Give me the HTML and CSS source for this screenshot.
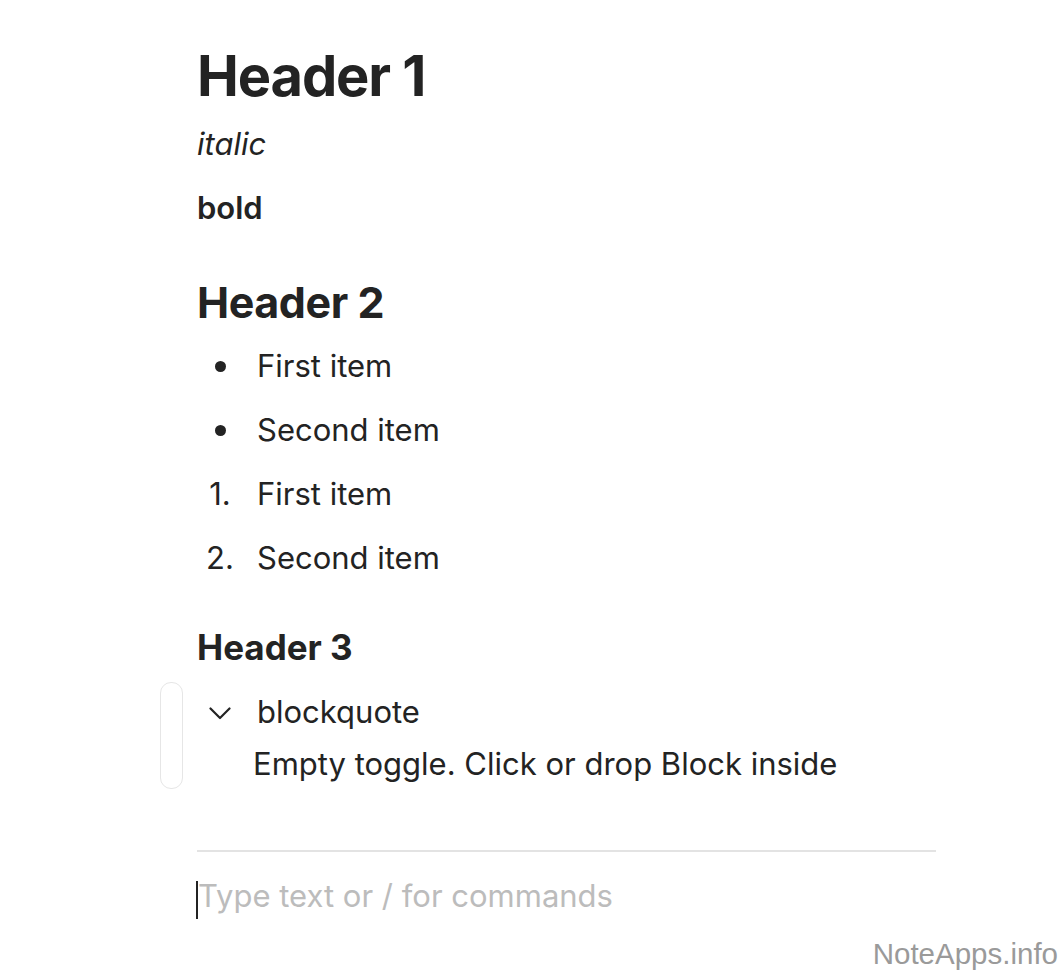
FILE: index.html
```html
<!DOCTYPE html>
<html lang="en">
<head>
    <meta charset="UTF-8">
    <meta name="viewport" content="width=device-width, initial-scale=1.0">
    <title>Editor</title>
    <link rel="stylesheet" href="styles.css">
</head>
<body>
    <div class="page">
        <h1 class="h1">Header 1</h1>
        <div class="block"><em>italic</em></div>
        <div class="block"><strong>bold</strong></div>

        <h2 class="h2">Header 2</h2>
        <div class="block list-item">
            <span class="marker"><span class="dot"></span></span>
            <span class="item-text">First item</span>
        </div>
        <div class="block list-item">
            <span class="marker"><span class="dot"></span></span>
            <span class="item-text">Second item</span>
        </div>
        <div class="block list-item">
            <span class="marker">1.</span>
            <span class="item-text">First item</span>
        </div>
        <div class="block list-item">
            <span class="marker">2.</span>
            <span class="item-text">Second item</span>
        </div>

        <h3 class="h3">Header 3</h3>
        <div class="toggle">
            <div class="drag-handle"></div>
            <div class="block list-item toggle-head">
                <span class="marker">
                    <svg class="chevron" width="22" height="13" viewBox="0 0 22 13">
                        <path d="M1.5 1.5 L11 11 L20.5 1.5" fill="none" stroke="#232323" stroke-width="2.2" stroke-linecap="round" stroke-linejoin="round"/>
                    </svg>
                </span>
                <span class="item-text">blockquote</span>
            </div>
            <div class="toggle-empty">Empty toggle. Click or drop Block inside</div>
        </div>

        <hr class="rule">

        <div class="input-line">
            <span class="caret"></span><span class="placeholder">Type text or / for commands</span>
        </div>
    </div>

    <div class="watermark">NoteApps.info</div>
</body>
</html>
```

FILE: styles.css
```css
body {
    margin: 0;
    background: #fff;
    color: #232323;
    font-family: Inter, "Noto Sans", sans-serif;
}
.page {
    width: 739px;
    padding: 44px 0 0 197px;
}
.h1 {
    margin: 0;
    font-size: 56px;
    line-height: 64px;
    font-weight: 700;
    letter-spacing: -0.02em;
    padding-bottom: 4px;
}
.h2 {
    margin: 36px 0 0;
    font-size: 43px;
    line-height: 52px;
    font-weight: 700;
    letter-spacing: -0.01em;
    padding-bottom: 6px;
}
.h3 {
    margin: 35px 0 0;
    font-size: 35px;
    line-height: 44px;
    font-weight: 700;
    padding-bottom: 11px;
}
.block {
    font-size: 31px;
    line-height: 44px;
    padding: 10px 0;
}
.block strong {
    font-weight: 600;
}
.list-item {
    display: flex;
}
.marker {
    width: 46px;
    height: 44px;
    display: flex;
    align-items: center;
    justify-content: center;
    flex-shrink: 0;
}
.dot {
    width: 11px;
    height: 11px;
    border-radius: 50%;
    background: #232323;
}
.item-text {
    margin-left: 14px;
}
.toggle {
    position: relative;
}
.toggle-head {
    padding-bottom: 8px;
}
.chevron {
    margin-top: 3px;
}
.drag-handle {
    position: absolute;
    left: -37px;
    top: 2px;
    width: 21px;
    height: 105px;
    border: 1.5px solid #e6e6e6;
    border-radius: 11px;
}
.toggle-empty {
    font-size: 31px;
    line-height: 44px;
    padding-left: 56px;
}
.rule {
    margin: 64px 0 0;
    border: 0;
    border-top: 2px solid #e3e3e3;
}
.input-line {
    margin-top: 22px;
    font-size: 31px;
    line-height: 44px;
    display: flex;
    align-items: flex-start;
}
.caret {
    width: 2px;
    height: 38px;
    margin: 7px 0 0 -1px;
    background: #232323;
}
.placeholder {
    color: #bcbcbc;
}
.watermark {
    position: absolute;
    right: 4px;
    top: 937px;
    font-family: "Liberation Sans", Arial, sans-serif;
    font-size: 29.5px;
    color: #9a9a9a;
}
```
